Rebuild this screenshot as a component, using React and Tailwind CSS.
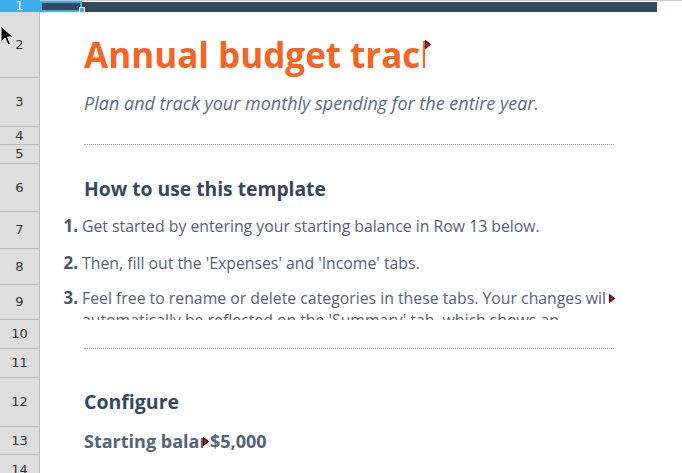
import React from "react";

const font = { fontFamily: '"Open Sans", "Noto Sans", sans-serif' };

// small clip indicator shown where text is cut off
function ClipMark({ className }) {
  return (
    <svg className={className} width="6" height="9" viewBox="0 0 6 9">
      <path d="M0.5 0.5 L5.5 4.5 L0.5 8.5 Z" fill="#e0001b" stroke="#000" strokeWidth="1" />
    </svg>
  );
}

function Row({ n, h, active, children }) {
  return (
    <div className={`flex ${h}`}>
      <div
        className={`w-[40px] shrink-0 flex items-center justify-center border-r border-b text-[13px] ${
          active ? "bg-[#3daee9] text-white border-b-[#3daee9] border-r-[#3daee9]" : "bg-[#dedede] text-[#333] border-[#bcbcbc]"
        }`}
        style={{ fontFamily: '"DejaVu Sans", sans-serif' }}
      >
        {n}
      </div>
      <div className="relative flex-1 min-w-0">{children}</div>
    </div>
  );
}

export default function App() {
  return (
    <div className="relative w-[682px] h-[473px] overflow-hidden bg-white" style={font}>
      {/* row 1: dark banner + selected A1 */}
      <Row n="1" h="h-[12px]" active>
        <div className="h-[1px] bg-[#c8c8c8] w-full" />
        <div className="absolute left-0 top-[2px] h-[10px] w-[617px] bg-[#34495e]" />
        <div className="absolute left-0 top-[1px] h-[11px] w-[42px] border-2 border-[#3daee9]" />
        <div className="absolute left-[39px] top-[7px] w-[6px] h-[6px] bg-[#3daee9] border border-white" />
      </Row>

      <Row n="2" h="h-[66px]">
        <div className="absolute left-[44px] top-[21px] w-[341px] overflow-hidden">
          <div className="whitespace-nowrap text-[35px] font-bold leading-[44px] text-[#f46524]">
            Annual budget tracker
          </div>
        </div>
        <ClipMark className="absolute left-[385px] top-[28px]" />
      </Row>

      <Row n="3" h="h-[49px]">
        <div className="pl-[44px] pt-[14px] text-[18px] italic leading-[22px] text-[#5d6b80] whitespace-nowrap">
          Plan and track your monthly spending for the entire year.
        </div>
      </Row>

      <Row n="4" h="h-[18px]">
        <div className="absolute left-[44px] bottom-0 w-[530px] border-b border-dotted border-[#9a9a9a]" />
      </Row>
      <Row n="5" h="h-[19px]" />

      <Row n="6" h="h-[48px]">
        <div className="pl-[44px] pt-[12px] text-[19.3px] font-bold leading-[26px] text-[#34495e] whitespace-nowrap">
          How to use this template
        </div>
      </Row>

      <Row n="7" h="h-[37px]">
        <div className="flex items-baseline pt-[3px] leading-[22px] whitespace-nowrap">
          <span className="w-[40px] text-right pr-[2px] text-[17px] font-bold text-[#4a5568]">1.</span>
          <span className="pl-[2px] text-[15.8px] text-[#566375]">
            Get started by entering your starting balance in Row 13 below.
          </span>
        </div>
      </Row>

      <Row n="8" h="h-[36px]">
        <div className="flex items-baseline pt-[3px] leading-[22px] whitespace-nowrap">
          <span className="w-[40px] text-right pr-[2px] text-[17px] font-bold text-[#4a5568]">2.</span>
          <span className="pl-[2px] text-[15.8px] text-[#566375]">
            Then, fill out the 'Expenses' and 'Income' tabs.
          </span>
        </div>
      </Row>

      <Row n="9" h="h-[35px]">
        <div className="h-full overflow-hidden flex items-start pt-[2px] leading-[22px]">
          <span className="w-[40px] shrink-0 text-right pr-[2px] text-[17px] font-bold text-[#4a5568]">3.</span>
          <div className="pl-[2px] w-[527px] overflow-hidden text-[15.8px] text-[#566375] whitespace-nowrap">
            <div>Feel free to rename or delete categories in these tabs. Your changes will</div>
            <div>automatically be reflected on the 'Summary' tab, which shows an</div>
          </div>
        </div>
        <ClipMark className="absolute left-[569px] top-[9px]" />
      </Row>

      <Row n="10" h="h-[29px]">
        <div className="absolute left-[44px] bottom-0 w-[530px] border-b border-dotted border-[#9a9a9a]" />
      </Row>
      <Row n="11" h="h-[29px]" />

      <Row n="12" h="h-[49px]">
        <div className="pl-[44px] pt-[11px] text-[19.5px] font-bold leading-[26px] text-[#34495e] whitespace-nowrap">
          Configure
        </div>
      </Row>

      <Row n="13" h="h-[28px]">
        <div className="flex items-center h-full pl-[44px] text-[18px] font-bold text-[#566375] whitespace-nowrap">
          <div className="w-[119px] overflow-hidden">Starting balance</div>
          <ClipMark className="ml-[0px]" />
          <span className="ml-[1px]">$5,000</span>
        </div>
      </Row>

      <Row n="14" h="h-[30px]" />

      {/* mouse pointer */}
      <svg className="absolute left-0 top-[25px]" width="16" height="22" viewBox="0 0 16 22">
        <path d="M1 1 L1 17 L5 13 L8 20 L10.5 19 L7.5 12 L13 12 Z" fill="#000" stroke="#fff" strokeWidth="1" />
      </svg>
    </div>
  );
}
